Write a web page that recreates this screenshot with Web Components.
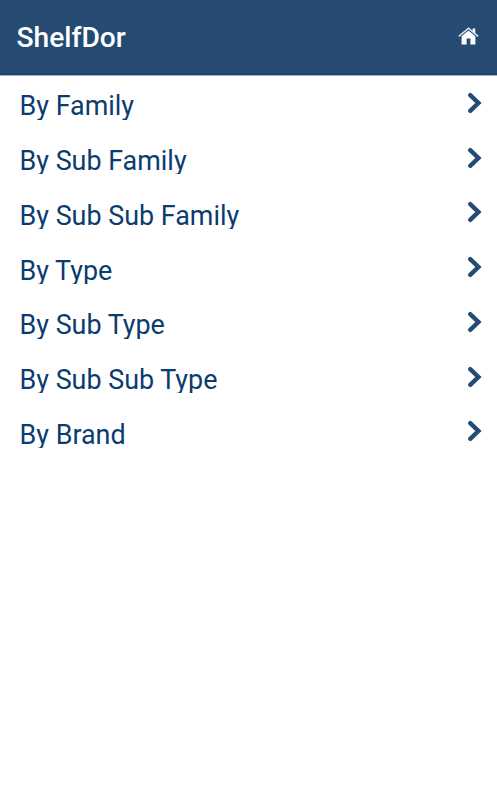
<!DOCTYPE html>
<html lang="en">
<head>
<meta charset="utf-8">
<title>ShelfDor</title>
<style>
  body {
    margin: 0;
    background: #fff;
    font-family: Roboto, sans-serif;
  }
</style>
</head>
<body>
<app-bar>ShelfDor</app-bar>
<nav-list>
  <nav-item>By Family</nav-item>
  <nav-item>By Sub Family</nav-item>
  <nav-item>By Sub Sub Family</nav-item>
  <nav-item>By Type</nav-item>
  <nav-item>By Sub Type</nav-item>
  <nav-item>By Sub Sub Type</nav-item>
  <nav-item>By Brand</nav-item>
</nav-list>

<script>
class AppBar extends HTMLElement {
  constructor() {
    super();
    this.attachShadow({ mode: 'open' });
  }

  connectedCallback() {
    this.shadowRoot.innerHTML = `
      <style>
        :host {
          display: flex;
          align-items: center;
          justify-content: space-between;
          box-sizing: border-box;
          height: 75px;
          padding: 1px 18px 0 16.5px;
          background: #254b73;
          border-bottom: 1px solid #16426c;
          box-shadow: 0 1px 0 #a3b3c4;
          color: #fff;
        }
        h1 {
          margin: 0;
          font-size: 28.2px;
          font-weight: 500;
          line-height: 34px;
        }
        svg {
          display: block;
          width: 21px;
          height: 18px;
          margin-top: -3px;
        }
      </style>
      <h1><slot></slot></h1>
      <svg viewBox="0 0 21 18" aria-label="Home">
        <path d="M.8 9.3 10.5 1.2l9.7 8.1" fill="none" stroke="#fff" stroke-opacity=".85" stroke-width="1.5"/>
        <path d="M14.6 1.4h2.6v5l-2.6-2.2z" fill="#fff"/>
        <path d="M3.6 9.3l6.9-5.7 6.9 5.7v8.1h-5v-6H8.6v6h-5z" fill="#fff"/>
      </svg>
    `;
  }
}

class NavList extends HTMLElement {
  constructor() {
    super();
    this.attachShadow({ mode: 'open' });
    this.shadowRoot.innerHTML = `
      <style>
        :host {
          display: block;
          padding-top: 2.5px;
        }
      </style>
      <slot></slot>
    `;
  }
}

class NavItem extends HTMLElement {
  constructor() {
    super();
    this.attachShadow({ mode: 'open' });
  }

  connectedCallback() {
    this.shadowRoot.innerHTML = `
      <style>
        :host {
          display: flex;
          align-items: center;
          justify-content: space-between;
          height: 54.75px;
          padding: 0 15px 0 19.5px;
          color: #0b3c70;
          cursor: pointer;
        }
        .label {
          box-sizing: border-box;
          height: 29.5px;
          padding-top: 3.25px;
          font-size: 26.9px;
          line-height: 27px;
          overflow: hidden;
        }
        svg {
          display: block;
          width: 15px;
          height: 22px;
          margin-top: -4px;
        }
      </style>
      <span class="label"><slot></slot></span>
      <svg viewBox="0 0 15 22" aria-hidden="true">
        <path d="M3.2 3.2 11.4 11l-8.2 7.800" fill="none" stroke="#254b73" stroke-width="4.4" stroke-linecap="round"/>
      </svg>
    `;
  }
}

customElements.define('app-bar', AppBar);
customElements.define('nav-list', NavList);
customElements.define('nav-item', NavItem);
</script>
</body>
</html>
